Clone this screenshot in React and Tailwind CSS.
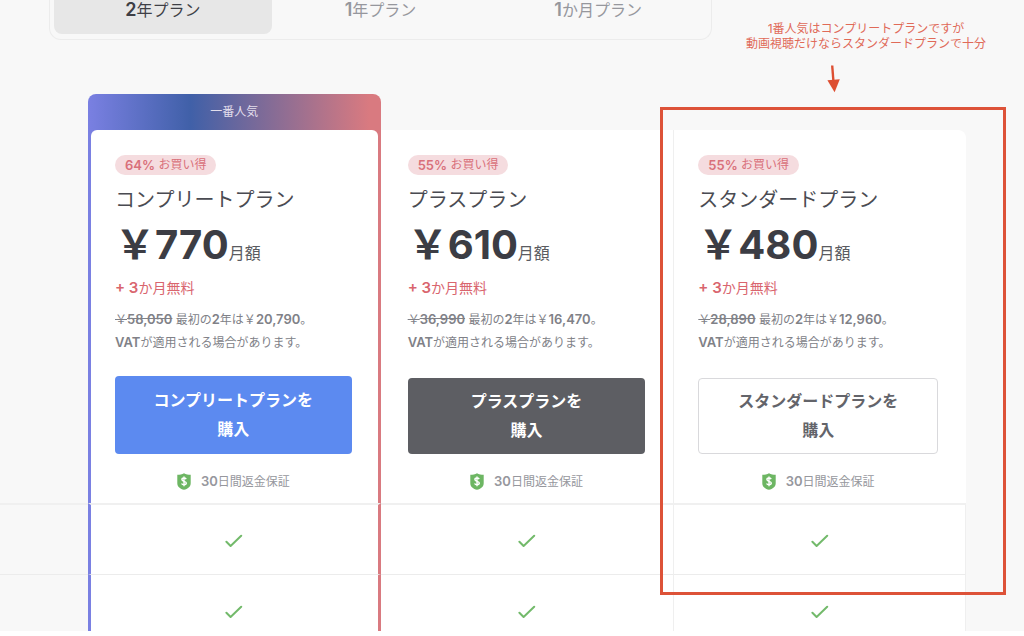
const terms = [
  { id: "2y", count: "2", label: "年プラン", active: true },
  { id: "1y", count: "1", label: "年プラン" },
  { id: "1m", count: "1", label: "か月プラン" },
];

const plans = [
  {
    id: "complete",
    name: "コンプリートプラン",
    off: "64%",
    price: "770",
    was: "58,050",
    total: "20,790",
    popular: true,
    cell: "bg-[linear-gradient(90deg,#7a80e2_50%,#d97a80_50%)] px-[3px]",
    card: "rounded-t-md pl-6 pr-[26px]",
    button: "mt-[22px] h-[78px] bg-[#5c8af0] text-white",
  },
  {
    id: "plus",
    name: "プラスプラン",
    off: "55%",
    price: "610",
    was: "36,990",
    total: "16,470",
    cell: "",
    card: "pl-[27px] pr-7",
    button: "mt-6 h-[76px] bg-[#5d5e63] text-white",
  },
  {
    id: "standard",
    name: "スタンダードプラン",
    off: "55%",
    price: "480",
    was: "28,890",
    total: "12,960",
    highlighted: true,
    cell: "relative",
    card: "rounded-tr-lg border-l border-[#efefef] pl-6 pr-7",
    button: "mt-6 h-[76px] border border-[#d9d9dc] bg-white text-[#63646a]",
  },
];

const columnBorders = {
  complete: "border-l-[3px] border-r-[3px] border-l-[#7a80e2] border-r-[#d97a80]",
  plus: "",
  standard: "border-l border-r border-l-[#efefef] border-r-[#efefef]",
};

const features = [
  { id: "first", border: "border-t-2 border-t-[#f0f0f0]", height: "h-[71px] pt-0.5" },
  { id: "second", border: "border-t border-t-[#ececec]", height: "h-[57px] pt-[18px]" },
];

function Num({ children }) {
  return <span className="font-semibold">{children}</span>;
}

// Latin runs in the fine print are set one step larger than the kana
function FineNum({ children }) {
  return <span className="text-[13px] font-semibold">{children}</span>;
}

function ShieldIcon() {
  return (
    <svg width="14" height="17" viewBox="0 0 14 17" aria-hidden="true">
      <path
        d="M7 0.3C5.2 1.3 2.6 1.8 0.3 1.8V10.2C0.3 13.8 3.4 16 7 16.8C10.6 16 13.7 13.8 13.7 10.2V1.8C11.4 1.8 8.8 1.3 7 0.3Z"
        fill="#6db663"
      />
      <path
        d="M9.2 6.1C8.8 5.4 8 5 7 5C5.8 5 4.9 5.6 4.9 6.6C4.9 8.9 9.3 7.7 9.3 10.1C9.3 11.1 8.3 11.8 7 11.8C5.9 11.8 5 11.3 4.6 10.5M7 3.6V13.2"
        fill="none"
        stroke="#fff"
        strokeWidth="1.4"
      />
    </svg>
  );
}

function CheckIcon() {
  return (
    <svg
      width="18"
      height="14"
      viewBox="0 0 18 14"
      className="mx-auto block"
      role="img"
      aria-label="対応"
    >
      <path
        d="M1.4 7.8L5.6 12L16.2 1.8"
        fill="none"
        stroke="#73ba6b"
        strokeWidth="2"
        strokeLinecap="round"
        strokeLinejoin="round"
      />
    </svg>
  );
}

function TermTabs() {
  return (
    <nav className="ml-[49px] flex h-10 w-full max-w-[663px] rounded-b-xl border border-t-0 border-[#ececec] px-1 pb-[5px]">
      {terms.map((term) => (
        <button
          key={term.id}
          type="button"
          className={
            term.active
              ? "flex-1 rounded-b-lg bg-[#e7e7e7] pb-3.5 text-base leading-5 text-[#3e3f46]"
              : "flex-1 pb-3.5 text-base leading-5 text-[#96979d]"
          }
        >
          <span className="text-lg leading-5 font-semibold">{term.count}</span>
          {term.label}
        </button>
      ))}
    </nav>
  );
}

function Note() {
  return (
    <div className="mr-[38px] flex shrink-0 flex-col items-center pt-[21px] text-[#e06a58]">
      <p className="text-center text-xs leading-[15px]">
        1番人気はコンプリートプランですが
        <br />
        動画視聴だけならスタンダードプランで十分
      </p>
      <svg width="14" height="28" viewBox="0 0 14 28" className="mt-3.5 mr-16" aria-hidden="true">
        <path d="M5.2 0.5L6.4 16" stroke="#dd4f32" strokeWidth="2.4" />
        <path d="M0.4 15.2L12.8 14.2L7.6 27.2Z" fill="#dd4f32" />
      </svg>
    </div>
  );
}

function PlanCard({ plan }) {
  return (
    <div className={`bg-white pt-[25px] text-left font-normal ${plan.card}`}>
      <span className="flex h-5 w-fit items-center rounded-full bg-[#f5dcdf] px-2.5 text-xs leading-5 text-[#d9707a]">
        <FineNum>{plan.off}</FineNum>&nbsp;お買い得
      </span>
      <h2 className="mt-[11px] text-xl leading-7 text-[#4a4b52]">{plan.name}</h2>
      <p className="mt-[7px] flex items-baseline text-[#3c3d44]">
        <span className="text-[40px] leading-[48px] font-bold">￥{plan.price}</span>
        <span className="text-base text-[#5a5b61]">月額</span>
      </p>
      <p className="mt-[9px] text-sm leading-5 text-[#d9656e]">
        <span className="text-[15px] font-semibold">+ 3</span>か月無料
      </p>
      <p className="mt-2.5 text-xs leading-[22px] whitespace-nowrap text-[#808187]">
        <s>
          ￥<FineNum>{plan.was}</FineNum>
        </s>{" "}
        最初の<FineNum>2</FineNum>年は￥<FineNum>{plan.total}</FineNum>。
        <br />
        <FineNum>VAT</FineNum>が適用される場合があります。
      </p>
      <button
        type="button"
        className={`block w-full rounded-sm text-base leading-[29px] font-bold ${plan.button}`}
      >
        {plan.name}を
        <br />
        購入
      </button>
      <p className="flex h-[49px] items-center justify-center gap-2.5 pt-1.5 text-xs text-[#96979d]">
        <ShieldIcon />
        <span>
          <FineNum>30</FineNum>日間返金保証
        </span>
      </p>
    </div>
  );
}

export default function App() {
  return (
    <main
      lang="ja"
      className="overflow-hidden bg-[#f8f8f8] font-['Inter','Noto_Sans_CJK_JP',sans-serif]"
    >
      <header className="flex h-[94px] items-start justify-between">
        <TermTabs />
        <Note />
      </header>

      <div className="pr-[58px]">
        <table className="w-full table-fixed border-separate border-spacing-0">
          <colgroup>
            <col className="w-[88px]" />
            <col />
            <col />
            <col />
          </colgroup>
          <thead>
            <tr className="h-9">
              <td />
              <th className="rounded-t-lg bg-[linear-gradient(90deg,#7a80e2_0%,#4060a8_35%,#d97a80_96%)] p-0 text-xs font-normal text-[#e2deec]">
                一番人気
              </th>
              <td colSpan={2} />
            </tr>
            <tr>
              <td />
              {plans.map((plan) => (
                <th key={plan.id} scope="col" className={`p-0 align-top ${plan.cell}`}>
                  <PlanCard plan={plan} />
                  {plan.highlighted && (
                    <div className="pointer-events-none absolute -top-[23px] -right-10 -left-[13px] z-10 h-[488px] border-3 border-[#dd5238]" />
                  )}
                </th>
              ))}
            </tr>
          </thead>
          <tbody>
            {features.map((feature) => (
              <tr key={feature.id}>
                <td className={feature.border} />
                {plans.map((plan) => (
                  <td
                    key={plan.id}
                    className={`bg-white p-0 align-middle ${feature.height} ${feature.border} ${columnBorders[plan.id]}`}
                  >
                    <CheckIcon />
                  </td>
                ))}
              </tr>
            ))}
          </tbody>
        </table>
      </div>
    </main>
  );
}
